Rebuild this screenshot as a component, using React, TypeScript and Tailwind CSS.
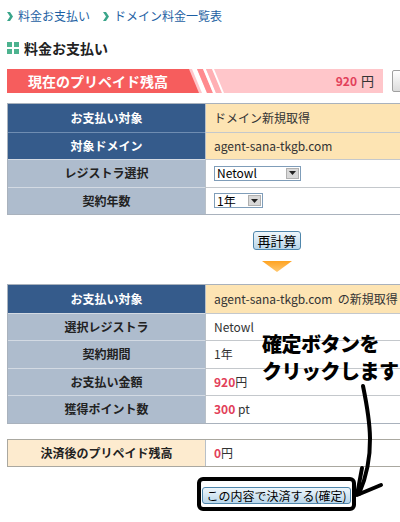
import React from "react";

type Row = {
    label: string;
    value: React.ReactNode;
};

const font = { fontFamily: '"Noto Sans CJK JP", "Noto Sans", sans-serif' };

const Chevron = () => (
    <svg width="6" height="9" viewBox="0 0 6 9" className="mr-[5px]">
        <path d="M0 0 L3 0 L6 4.5 L3 9 L0 9 L3 4.5 Z" fill="#3aa58a" />
    </svg>
);

const Squares = () => (
    <div className="grid grid-cols-2 gap-[2px] mr-[5px]">
        <div className="w-[5px] h-[5px] bg-[#4db38f]" />
        <div className="w-[5px] h-[5px] bg-[#4db38f]" />
        <div className="w-[5px] h-[5px] bg-[#4db38f]" />
        <div className="w-[5px] h-[5px] bg-[#4db38f]" />
    </div>
);

const Select = ({ label, width }: { label: string; width: string }) => (
    <div className={`flex items-center justify-between h-[15px] border border-[#7f9db9] bg-white pl-[2px] pr-[1px] ${width}`}>
        <span className="text-[12px] leading-none text-black">{label}</span>
        <div className="w-[13px] h-[11px] bg-[#d8d8d8] border border-[#b0b0b0] flex items-center justify-center">
            <svg width="7" height="4" viewBox="0 0 7 4">
                <path d="M0 0 L7 0 L3.5 4 Z" fill="#222" />
            </svg>
        </div>
    </div>
);

const Table = ({ rows, first }: { rows: Row[]; first: number }) => (
    <div className="w-[540px] border border-[#a9b2bd]">
        {rows.map((row, i) => {
            const dark = i < first;
            const leftLine = i === 0 ? "" : dark ? "border-t border-[#6f8db2]" : "border-t border-[#d3dae3]";
            const rightLine = i === 0 ? "" : "border-t border-[#c4c8cc]";
            const h = i === 0 ? "h-[27.5px]" : "h-[26.5px]";
            return (
                <div key={i} className="flex">
                    <div
                        className={`w-[197px] ${h} box-content flex items-center justify-center text-[12px] font-bold ${leftLine} ${
                            dark ? "bg-[#355b8b] text-white" : "bg-[#aebccd] text-[#222]"
                        }`}
                    >
                        {row.label}
                    </div>
                    <div
                        className={`flex-1 ${h} box-content flex items-center pl-[8px] text-[12px] text-[#333] border-l border-l-[#b8c0c8] ${rightLine} ${
                            dark ? "bg-[#fde4b3]" : "bg-white"
                        }`}
                    >
                        {row.value}
                    </div>
                </div>
            );
        })}
    </div>
);

const Red = ({ children }: { children: React.ReactNode }) => (
    <span className="text-[#e2405a] font-bold">{children}</span>
);

const App = () => {
    const rows1: Row[] = [
        { label: "お支払い対象", value: "ドメイン新規取得" },
        { label: "対象ドメイン", value: "agent-sana-tkgb.com" },
        { label: "レジストラ選択", value: <Select label="Netowl" width="w-[87px]" /> },
        { label: "契約年数", value: <Select label="1年" width="w-[49px]" /> },
    ];

    const rows2: Row[] = [
        { label: "お支払い対象", value: "agent-sana-tkgb.com\u00a0\u00a0の新規取得" },
        { label: "選択レジストラ", value: "Netowl" },
        { label: "契約期間", value: "1年" },
        { label: "お支払い金額", value: <span><Red>920</Red>円</span> },
        { label: "獲得ポイント数", value: <span><Red>300</Red> pt</span> },
    ];

    return (
        <div className="relative w-[400px] h-[522px] overflow-hidden bg-white" style={font}>
            <div className="pl-[7px] pt-[9px] w-[560px]">
                {/* breadcrumb */}
                <div className="flex items-center text-[12px] text-[#1d5fa3] h-[14px]">
                    <Chevron />
                    <span>料金お支払い</span>
                    <span className="w-[13px]" />
                    <Chevron />
                    <span>ドメイン料金一覧表</span>
                </div>

                {/* title */}
                <div className="flex items-center mt-[17px] h-[16px]">
                    <Squares />
                    <span className="text-[14px] font-bold text-[#222]">料金お支払い</span>
                </div>

                {/* prepaid balance */}
                <div className="flex items-center mt-[13px]">
                    <div className="relative w-[376px] h-[24px] bg-[#ffc6ca] flex items-center overflow-hidden">
                        <svg className="absolute left-0 top-0" width="230" height="24" viewBox="0 0 230 24">
                            <polygon points="0,0 182,0 192,24 0,24" fill="#f65d5d" />
                            <polygon points="185,0 190,0 200,24 195,24" fill="#ffffff" />
                            <polygon points="190,0 196,0 206,24 200,24" fill="#ff8a8e" />
                            <polygon points="196,0 199,0 209,24 206,24" fill="#ffffff" />
                            <polygon points="199,0 205,0 215,24 209,24" fill="#ffb0b4" />
                            <polygon points="205,0 207,0 217,24 215,24" fill="#ffffff" />
                        </svg>
                        <span className="relative pl-[21px] text-[14px] font-bold text-white">現在のプリペイド残高</span>
                        <span className="relative ml-auto pr-[9px] text-[12px]">
                            <span className="text-[#e2405a] font-bold">920</span>
                            <span className="text-[#333] text-[13px] ml-[4px]">円</span>
                        </span>
                    </div>
                    <div className="ml-[9px] w-[40px] h-[22px] border border-[#a0a0a0] rounded-[2px] bg-gradient-to-b from-white to-[#dcdcdc]" />
                </div>

                {/* input table */}
                <div className="mt-[10px]">
                    <Table rows={rows1} first={2} />
                </div>

                {/* recalc */}
                <div className="w-[540px] flex flex-col items-center">
                    <button className="mt-[16px] h-[19px] px-[3px] text-[13px] leading-none text-black border border-[#4f86ab] rounded-[3px] bg-gradient-to-b from-[#eef6fb] to-[#b9d6ea]">
                        再計算
                    </button>
                    <svg className="mt-[11px]" width="30" height="11" viewBox="0 0 30 11">
                        <defs>
                            <linearGradient id="tri" x1="0" y1="0" x2="0" y2="1">
                                <stop offset="0" stopColor="#ffa321" />
                                <stop offset="1" stopColor="#ffc870" />
                            </linearGradient>
                        </defs>
                        <path d="M0 0 L30 0 L15 11 Z" fill="url(#tri)" />
                    </svg>
                </div>

                {/* confirmation table */}
                <div className="mt-[12px]">
                    <Table rows={rows2} first={1} />
                </div>

                {/* after balance */}
                <div className="mt-[15px] w-[540px] flex h-[28px] border border-[#aaa8a0]">
                    <div className="w-[197px] bg-[#fdebcf] flex items-center justify-center text-[12px] font-bold text-[#222]">
                        決済後のプリペイド残高
                    </div>
                    <div className="flex-1 flex items-center pl-[8px] text-[12px] text-[#333] border-l border-[#b8c0c8]">
                        <Red>0</Red>円
                    </div>
                </div>

                {/* submit */}
                <div className="w-[540px] flex justify-center mt-[10px]">
                    <div className="border-[4px] border-black rounded-[6px] p-[1px] -ml-[1px]">
                        <button className="h-[17px] px-[3px] text-[12px] leading-none text-black border border-[#4f86ab] rounded-[3px] bg-gradient-to-b from-[#eef6fb] to-[#b9d6ea]">
                            この内容で決済する(確定)
                        </button>
                    </div>
                </div>
            </div>

            {/* annotation */}
            <div className="absolute left-[262px] top-[330px] text-[20px] leading-[27px] font-black text-black tracking-[-0.5px] whitespace-nowrap">
                <div>確定ボタンを</div>
                <div>クリックします</div>
            </div>
            <svg className="absolute left-0 top-0 pointer-events-none" width="400" height="522" viewBox="0 0 400 522">
                <path d="M363 386 C 370 420, 376 455, 359 494" fill="none" stroke="#000" strokeWidth="4" strokeLinecap="round" />
                <path d="M362 468 L357 495 L381 485" fill="none" stroke="#000" strokeWidth="4" strokeLinecap="round" strokeLinejoin="round" />
            </svg>
        </div>
    );
};

export default App;
